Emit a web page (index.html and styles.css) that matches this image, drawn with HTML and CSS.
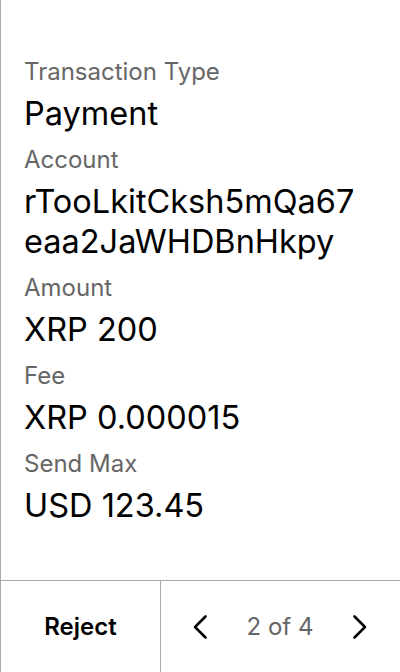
FILE: index.html
```html
<!DOCTYPE html>
<html>
<head>
<meta charset="utf-8">
<link rel="stylesheet" href="styles.css">
</head>
<body>
<div class="screen">
  <main class="details">
    <div class="row">
      <div class="label">Transaction Type</div>
      <div class="value">Payment</div>
    </div>
    <div class="row">
      <div class="label">Account</div>
      <div class="value">rTooLkitCksh5mQa67eaa2JaWHDBnHkpy</div>
    </div>
    <div class="row">
      <div class="label">Amount</div>
      <div class="value">XRP 200</div>
    </div>
    <div class="row">
      <div class="label">Fee</div>
      <div class="value">XRP 0.000015</div>
    </div>
    <div class="row">
      <div class="label">Send Max</div>
      <div class="value">USD 123.45</div>
    </div>
  </main>
  <footer class="footer">
    <button class="reject">Reject</button>
    <div class="pager">
      <svg class="chev" width="20" height="28" viewBox="0 0 20 28"><path d="M15.5 3.5 L5 14 L15.5 24.5" fill="none" stroke="#000" stroke-width="2.6" stroke-linecap="round" stroke-linejoin="round"/></svg>
      <span class="count">2 of 4</span>
      <svg class="chev" width="20" height="28" viewBox="0 0 20 28"><path d="M4.5 3.5 L15 14 L4.5 24.5" fill="none" stroke="#000" stroke-width="2.6" stroke-linecap="round" stroke-linejoin="round"/></svg>
    </div>
  </footer>
</div>
</body>
</html>
```
FILE: styles.css
```css
html, body {
  margin: 0;
  padding: 0;
  background: #fff;
}
body {
  font-family: Inter, "Noto Sans", sans-serif;
  color: #000;
}
.screen {
  width: 400px;
  height: 672px;
  box-sizing: border-box;
  border-left: 1px solid #a9a9a9;
  display: flex;
  flex-direction: column;
}
.details {
  flex: 1;
  padding: 58px 38px 0 23px;
  display: flex;
  flex-direction: column;
  gap: 12px;
}
.row {
  display: flex;
  flex-direction: column;
  gap: 8px;
}
.label {
  font-size: 24px;
  line-height: 28px;
  color: #666;
}
.value {
  font-size: 32.5px;
  line-height: 40px;
  color: #000;
  word-break: break-all;
}
.footer {
  height: 92px;
  box-sizing: border-box;
  border-top: 1px solid #a9a9a9;
  display: flex;
}
.reject {
  width: 160px;
  border: none;
  border-right: 1px solid #a9a9a9;
  background: #fff;
  font-family: Inter, "Noto Sans", sans-serif;
  font-size: 24px;
  font-weight: 600;
  color: #000;
  padding: 0;
}
.pager {
  flex: 1;
  display: flex;
  align-items: center;
  justify-content: space-between;
  padding: 0 30px 0 29px;
}
.count {
  font-size: 24px;
  color: #666;
}
.chev {
  display: block;
}
```
